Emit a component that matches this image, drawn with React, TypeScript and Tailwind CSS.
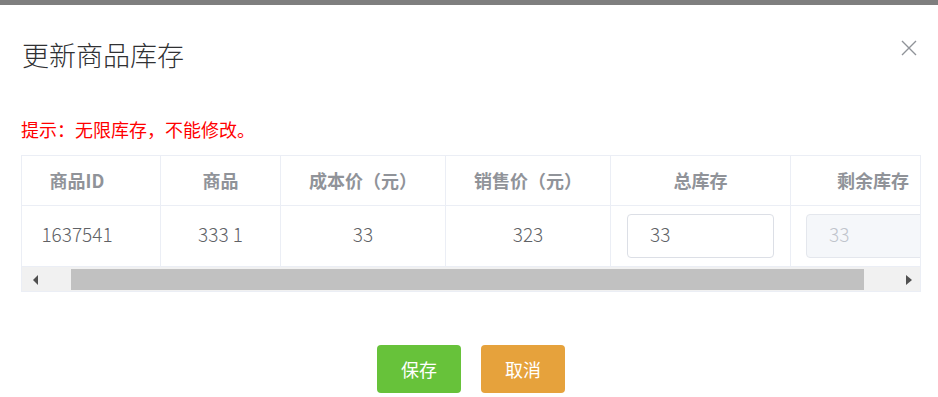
import React from "react";

const cols = [
  { w: 139, label: "商品ID", value: "1637541", extra: "pr-[28px]" },
  { w: 120, label: "商品", value: "333 1", extra: "" },
  { w: 165, label: "成本价（元）", value: "33", extra: "" },
  { w: 165, label: "销售价（元）", value: "323", extra: "" },
];

export default function App() {
  return (
    <div
      className="w-[938px] h-[397px] bg-white overflow-hidden relative"
      style={{ fontFamily: '"Noto Sans CJK SC", "Noto Sans", sans-serif' }}
    >
      <div className="h-[5px] bg-[#7f7f7f]" />
      <div className="pt-[35px] pl-[22px]">
        <div className="text-[27px] leading-[30px] font-light text-[#303133]">更新商品库存</div>
      </div>
      <button className="absolute left-[901px] top-[40px] w-[16px] h-[16px]">
        <svg width="16" height="16" viewBox="0 0 16 16">
          <path d="M1 1 L15 15 M15 1 L1 15" stroke="#909399" strokeWidth="1.4" fill="none" />
        </svg>
      </button>
      <div className="mt-[47px] pl-[21px] text-[18px] leading-[24px] text-[#ff0000]">
        提示：无限库存，不能修改。
      </div>
      <div className="mt-[14px] ml-[21px] w-[900px] border border-[#ebeef5] overflow-hidden">
        <div className="w-[960px]">
          <div className="flex h-[50px] border-b border-[#ebeef5]">
            {cols.map((c) => (
              <div
                key={c.label}
                style={{ width: c.w }}
                className={`shrink-0 border-r border-[#ebeef5] flex items-center justify-center text-[18px] font-bold text-[#909399] ${c.extra}`}
              >
                {c.label}
              </div>
            ))}
            <div className="w-[180px] shrink-0 border-r border-[#ebeef5] flex items-center justify-center text-[18px] font-bold text-[#909399]">
              总库存
            </div>
            <div className="w-[164px] shrink-0 flex items-center justify-center text-[18px] font-bold text-[#909399]">
              剩余库存
            </div>
          </div>
          <div className="flex h-[61px] border-b border-[#ebeef5]">
            {cols.map((c) => (
              <div
                key={c.label}
                style={{ width: c.w }}
                className={`shrink-0 border-r border-[#ebeef5] flex items-center justify-center pb-[3px] text-[19px] font-light text-[#606266] ${c.extra}`}
              >
                {c.value}
              </div>
            ))}
            <div className="w-[180px] shrink-0 border-r border-[#ebeef5] flex items-center px-[16px]">
              <div className="w-[148px] h-[44px] border border-[#dcdfe6] rounded-[4px] flex items-center pl-[22px] pb-[3px] text-[19px] font-light text-[#606266]">
                33
              </div>
            </div>
            <div className="w-[164px] shrink-0 flex items-center pl-[15px]">
              <div className="w-[148px] h-[44px] border border-[#e4e7ed] bg-[#f5f7fa] rounded-[4px] flex items-center pl-[22px] pb-[3px] text-[19px] font-light text-[#c0c4cc]">
                33
              </div>
            </div>
          </div>
        </div>
        <div className="relative h-[24px] bg-[#f1f1f1]">
          <svg className="absolute left-[11px] top-[8px]" width="6" height="10" viewBox="0 0 6 10">
            <path d="M5 0 L0 5 L5 10 Z" fill="#505050" />
          </svg>
          <div className="absolute left-[49px] top-[2px] w-[793px] h-[21px] bg-[#c1c1c1]" />
          <svg className="absolute left-[884px] top-[8px]" width="6" height="10" viewBox="0 0 6 10">
            <path d="M0 0 L6 5 L0 10 Z" fill="#505050" />
          </svg>
        </div>
      </div>
      <div className="mt-[53px] flex justify-center gap-[20px] pl-[4px]">
        <button className="w-[84px] h-[48px] rounded-[4px] bg-[#67c23a] text-white text-[18px]">保存</button>
        <button className="w-[84px] h-[48px] rounded-[4px] bg-[#e6a23c] text-white text-[18px]">取消</button>
      </div>
    </div>
  );
}
